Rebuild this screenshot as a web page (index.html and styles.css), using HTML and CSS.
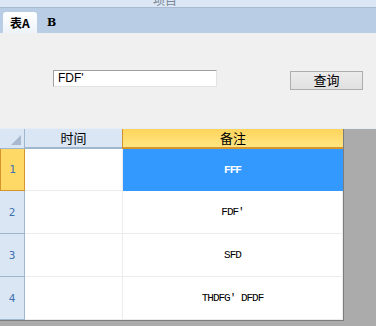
FILE: index.html
```html
<!DOCTYPE html>
<html lang="zh">
<head>
    <meta charset="UTF-8">
    <meta name="viewport" content="width=device-width, initial-scale=1.0">
    <title>项目</title>
    <link rel="stylesheet" href="styles.css">
</head>
<body>
<div class="window">
    <div class="titlebar"><span class="title">项目</span></div>
    <div class="tabs">
        <div class="tab active">表A</div>
        <div class="tab">B</div>
    </div>
    <div class="panel">
        <div class="search">FDF'</div>
        <div class="btn">查询</div>
    </div>
    <div class="gridwrap">
        <div class="grid">
            <div class="corner"><span class="tri"></span></div>
            <div class="colhead">时间</div>
            <div class="colhead sel">备注</div>

            <div class="rowhead sel">1</div>
            <div class="cell"></div>
            <div class="cell current">FFF</div>

            <div class="rowhead">2</div>
            <div class="cell"></div>
            <div class="cell">FDF′</div>

            <div class="rowhead">3</div>
            <div class="cell"></div>
            <div class="cell">SFD</div>

            <div class="rowhead">4</div>
            <div class="cell"></div>
            <div class="cell">THDFG′ DFDF</div>
        </div>
    </div>
</div>
</body>
</html>
```

FILE: styles.css
```css
body {
    margin: 0;
    background-color: #ababab;
    font-family: "Liberation Sans", "Noto Sans CJK SC", sans-serif;
}
.window {
    width: 376px;
    height: 326px;
    overflow: hidden;
    display: flex;
    flex-direction: column;
}
.titlebar {
    height: 7px;
    background-color: #dce7f5;
    border-bottom: 1px solid #a8bbd3;
    overflow: hidden;
    padding-left: 153px;
}
.title {
    display: block;
    margin-top: -7px;
    font-family: "Noto Sans CJK SC", sans-serif;
    font-size: 12px;
    line-height: 14px;
    color: #7b8799;
}
.tabs {
    height: 25px;
    background-color: #b9cde5;
    display: flex;
    align-items: flex-end;
    padding-left: 3px;
    gap: 4px;
}
.tab {
    height: 21px;
    line-height: 21px;
    padding: 0 6px;
    font-family: "DejaVu Serif", "Noto Sans CJK SC", serif;
    font-size: 11px;
    font-weight: bold;
    color: #000;
}
.tab.active {
    width: 34px;
    box-sizing: border-box;
    padding: 0 0 0 7px;
    background: linear-gradient(#ffffff, #eef3fa);
    border-radius: 3px 3px 0 0;
    font-family: "Noto Sans CJK SC", sans-serif;
    font-size: 12px;
}
.panel {
    height: 95px;
    background-color: #f0f0f0;
    display: flex;
    align-items: flex-start;
    padding-top: 37px;
    box-sizing: border-box;
}
.search {
    margin-left: 53px;
    width: 164px;
    height: 17px;
    box-sizing: border-box;
    background-color: #fff;
    border-top: 1px solid #a0a0a0;
    border-left: 1px solid #a0a0a0;
    border-right: 1px solid #e3e3e3;
    border-bottom: 1px solid #e3e3e3;
    font-size: 12px;
    line-height: 15px;
    padding-left: 4px;
    color: #000;
}
.btn {
    margin-left: 73px;
    margin-top: 1px;
    width: 73px;
    height: 19px;
    box-sizing: border-box;
    border: 1px solid #adadad;
    background: linear-gradient(#ececec, #e0e0e0);
    text-align: center;
    font-family: "Noto Sans CJK SC", sans-serif;
    font-size: 13px;
    line-height: 16px;
    color: #000;
}
.gridwrap {
    flex: 1;
    background-color: #ababab;
    border-top: 1px solid #e6edf7;
}
.grid {
    display: grid;
    grid-template-columns: 25px 98px 220px;
    grid-template-rows: 20px 42px 43px 43px 43px;
    width: 343px;
    border-right: 1px solid #7d7d7d;
    border-bottom: 1px solid #7d7d7d;
    background-color: #fff;
}
.corner,
.colhead,
.rowhead {
    background-color: #dbe6f4;
    box-sizing: border-box;
}
.corner {
    border-right: 1px solid #9eb6ce;
    border-bottom: 1px solid #9eb6ce;
    position: relative;
}
.tri {
    position: absolute;
    right: 3px;
    bottom: 3px;
    width: 0;
    height: 0;
    border-left: 10px solid transparent;
    border-bottom: 10px solid #a8b8cf;
}
.colhead {
    border-right: 1px solid #9eb6ce;
    border-bottom: 2px solid #9eb6ce;
    text-align: center;
    font-family: "Noto Sans CJK SC", sans-serif;
    font-size: 13px;
    line-height: 18px;
    color: #000;
}
.colhead.sel {
    background: linear-gradient(#ffd45c, #ffe682);
    border-left: 1px solid #d6952c;
    border-right: none;
    border-bottom: 2px solid #d6952c;
    margin-left: -1px;
}
.rowhead {
    border-right: 1px solid #9eb6ce;
    border-bottom: 1px solid #9eb6ce;
    display: flex;
    align-items: center;
    justify-content: center;
    font-family: "DejaVu Sans Mono", monospace;
    font-size: 11px;
    color: #3f72b0;
}
.rowhead.sel {
    background-color: #ffd966;
    border: 1px solid #d6952c;
    border-top: none;
}
.cell {
    border-right: 1px solid #ececec;
    border-bottom: 1px solid #ececec;
    display: flex;
    align-items: center;
    justify-content: center;
    font-family: "Liberation Mono", monospace;
    font-size: 11px;
    letter-spacing: -1px;
    color: #000;
}
.cell.current {
    background-color: #3399ff;
    color: #fff;
    font-weight: bold;
    border-color: #3399ff;
}
```
